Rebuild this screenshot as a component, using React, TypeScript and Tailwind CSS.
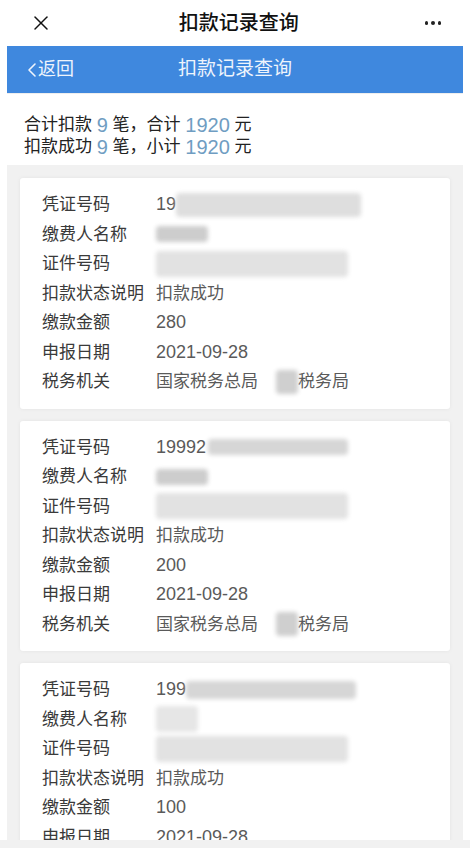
import React from "react";
import { X, ChevronLeft } from "lucide-react";

type Record = {
  voucher: string;
  amount: string;
  date: string;
  variant: number;
};

const records: Record[] = [
  { voucher: "19", amount: "280", date: "2021-09-28", variant: 0 },
  { voucher: "19992", amount: "200", date: "2021-09-28", variant: 1 },
  { voucher: "199", amount: "100", date: "2021-09-28", variant: 2 },
];

const Blur: React.FC<{ className: string }> = ({ className }) => (
  <span className={`inline-block rounded-sm blur-[2px] ${className}`} />
);

const Row: React.FC<{ label: string; children: React.ReactNode }> = ({ label, children }) => (
  <div className="flex h-[29.5px] items-center">
    <div className="w-[114px] shrink-0 text-[#3a3a3a]">{label}</div>
    <div className="flex items-center text-[#5a5a5a]">{children}</div>
  </div>
);

const RecordCard: React.FC<{ r: Record }> = ({ r }) => (
  <div className="rounded-[3px] bg-white px-[22px] py-3 shadow-[0_0_4px_rgba(0,0,0,0.06)]">
    <Row label="凭证号码">
      <span className="text-[18px]">{r.voucher}</span>
      <Blur
        className={
          r.variant === 1
            ? "ml-0.5 h-[16px] w-[140px] bg-[#d6d6d6]"
            : r.variant === 0
            ? "h-[24px] w-[185px] bg-[#dedede]"
            : "h-[18px] w-[170px] bg-[#d6d6d6]"
        }
      />
    </Row>
    <Row label="缴费人名称">
      <Blur className={r.variant === 2 ? "h-[26px] w-[42px] bg-[#e6e6e6]" : "h-[16px] w-[52px] bg-[#cdcdcd]"} />
    </Row>
    <Row label="证件号码">
      <Blur className="h-[26px] w-[192px] bg-[#e2e2e2]" />
    </Row>
    <Row label="扣款状态说明">扣款成功</Row>
    <Row label="缴款金额">
      <span className="text-[18px]">{r.amount}</span>
    </Row>
    <Row label="申报日期">
      <span className="text-[18px]">{r.date}</span>
    </Row>
    <Row label="税务机关">
      <span>国家税务总局</span>
      <span className="inline-block h-[22px] w-[18px] bg-white" />
      <Blur className="h-[24px] w-[22px] bg-[#cfcfcf]" />
      <span>税务局</span>
    </Row>
  </div>
);

export default function App() {
  return (
    <div
      className="relative h-[848px] w-[470px] overflow-hidden bg-white"
      style={{ fontFamily: '"Liberation Sans", "Noto Sans CJK SC", sans-serif' }}
    >
      {/* wechat top bar */}
      <div className="flex h-[46px] items-center justify-between px-[29px] text-[#111]">
        <X size={24} strokeWidth={1.5} />
        <div className="text-[20px] font-medium">扣款记录查询</div>
        <div className="flex gap-[3px]">
          <span className="h-[3.5px] w-[3.5px] rounded-full bg-[#222]" />
          <span className="h-[3.5px] w-[3.5px] rounded-full bg-[#222]" />
          <span className="h-[3.5px] w-[3.5px] rounded-full bg-[#222]" />
        </div>
      </div>

      <div className="mx-[7px]">
        {/* blue header */}
        <div className="relative flex h-[47px] items-center bg-[#3f88de] text-[#eef4fc]">
          <div className="flex items-center pl-[13px] text-[18px]">
            <ChevronLeft size={24} strokeWidth={1.6} className="-mr-1.5" />
            <span>返回</span>
          </div>
          <div className="pointer-events-none absolute left-0 right-0 text-center text-[19px]">扣款记录查询</div>
        </div>

        {/* summary */}
        <div className="border-t border-[#eeeeee] bg-white pb-[7px] pl-[17px] pt-[20px] text-[17px] text-[#222]">
          <div className="flex h-[22px] items-center whitespace-pre">
            合计扣款 <span className="text-[20px] leading-none text-[#6f9dc2]">9</span> 笔，合计{" "}
            <span className="text-[20px] leading-none text-[#6f9dc2]">1920</span> 元
          </div>
          <div className="flex h-[22px] items-center whitespace-pre">
            扣款成功 <span className="text-[20px] leading-none text-[#6f9dc2]">9</span> 笔，小计{" "}
            <span className="text-[20px] leading-none text-[#6f9dc2]">1920</span> 元
          </div>
        </div>

        {/* list */}
        <div className="flex flex-col gap-3 bg-[#f1f1f1] px-[13px] pb-4 pt-[13px] text-[17px]">
          {records.map((r, i) => (
            <RecordCard key={i} r={r} />
          ))}
        </div>
      </div>

      <div className="absolute bottom-0 left-0 right-0 h-[8px] bg-[#f1f1f1]" />
    </div>
  );
}
